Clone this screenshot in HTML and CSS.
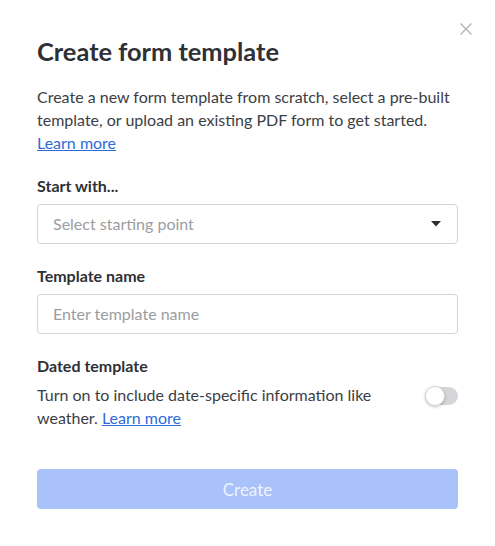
FILE: index.html
```html
<!DOCTYPE html>
<html lang="en">
<head>
<meta charset="utf-8">
<title>Create form template</title>
<link rel="stylesheet" href="styles.css">
</head>
<body>
<div class="dialog">
  <button class="close" aria-label="Close">
    <svg width="12" height="12" viewBox="0 0 12 12"><path d="M0.5 0.5 L11.5 11.5 M11.5 0.5 L0.5 11.5" stroke="#b3b3b3" stroke-width="1.4" fill="none"/></svg>
  </button>
  <h1 class="title">Create form template</h1>
  <p class="intro">Create a new form template from scratch, select a pre-built template, or upload an existing PDF form to get started. <a href="#" class="link">Learn more</a></p>

  <div class="field">
    <div class="label">Start with...</div>
    <div class="select">
      <span class="placeholder">Select starting point</span>
      <svg class="caret" width="10" height="6" viewBox="0 0 10 6"><path d="M0 0 H10 L5 5.5 Z" fill="#2b2d31"/></svg>
    </div>
  </div>

  <div class="field">
    <div class="label">Template name</div>
    <div class="input"><span class="placeholder">Enter template name</span></div>
  </div>

  <div class="field">
    <div class="label">Dated template</div>
    <div class="dated">
      <p class="desc">Turn on to include date-specific information like weather. <a href="#" class="link">Learn more</a></p>
      <div class="toggle"><span class="knob"></span></div>
    </div>
  </div>

  <button class="create">Create</button>
</div>
</body>
</html>
```
FILE: styles.css
```css
* { box-sizing: border-box; }
html, body { margin: 0; padding: 0; background: #ffffff; }
body { font-family: Lato, "Noto Sans", sans-serif; color: #3b3e44; }

.dialog {
  position: relative;
  width: 495px;
  padding: 35px 37px 0 37px;
}

.close {
  position: absolute;
  top: 23px;
  left: 460px;
  width: 12px;
  height: 12px;
  padding: 0;
  border: 0;
  background: none;
  display: block;
}
.close svg { display: block; }

.title {
  margin: 0;
  font-size: 25.4px;
  line-height: 33px;
  font-weight: 700;
  color: #2e3035;
}

.intro {
  margin: 17px 0 0 0;
  font-size: 16px;
  line-height: 23px;
  color: #3b3e44;
}

.link { color: #2f6bd6; text-decoration: underline; }

.field { margin-top: 20px; }

.label {
  font-size: 16px;
  line-height: 24px;
  font-weight: 700;
  color: #2e3035;
}

.select, .input {
  margin-top: 6px;
  height: 40px;
  border: 1px solid #d4d4d6;
  border-radius: 4px;
  display: flex;
  align-items: center;
  padding: 0 15px 1px 15px;
}
.select { justify-content: space-between; }
.caret { display: block; margin-right: 1px; }

.placeholder {
  font-size: 16px;
  color: #9b9da1;
}

.dated {
  margin-top: 5px;
  display: flex;
  align-items: flex-start;
  gap: 40px;
}
.desc {
  flex: 1;
  margin: 0;
  font-size: 16px;
  line-height: 23px;
}

.toggle {
  position: relative;
  flex: none;
  width: 33px;
  height: 18px;
  margin-top: 4px;
  border-radius: 9px;
  background: #d5d6da;
}
.knob {
  position: absolute;
  left: 0;
  top: -1px;
  width: 20px;
  height: 20px;
  border-radius: 50%;
  background: #ffffff;
  border: 1px solid #d8d8d8;
  box-shadow: 0 1px 3px rgba(0,0,0,0.25);
}

.create {
  display: block;
  width: 100%;
  height: 40px;
  margin-top: 40px;
  border: 0;
  border-radius: 4px;
  background: #a9c2fa;
  color: #eef3ff;
  font-family: Lato, "Noto Sans", sans-serif;
  font-size: 17px;
}
```
